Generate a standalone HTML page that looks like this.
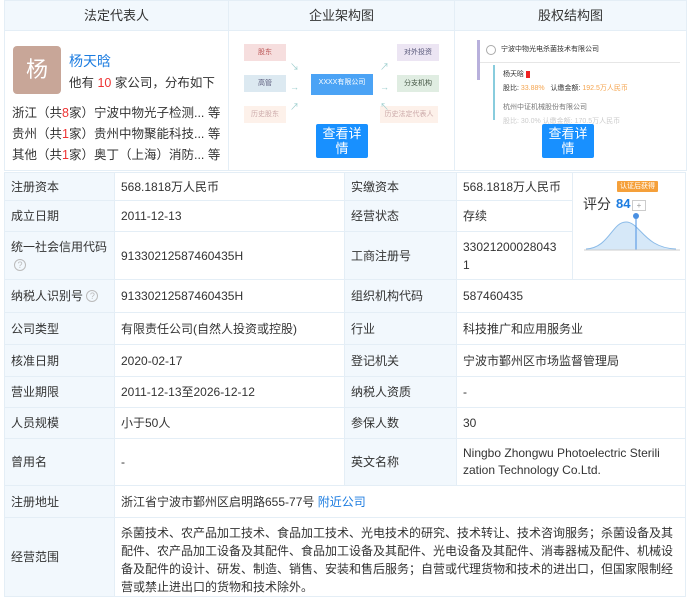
<!DOCTYPE html>
<html><head><meta charset="utf-8"><style>
*{margin:0;padding:0;box-sizing:border-box}
body{width:687px;height:595px;overflow:hidden;background:#fff;font-family:"Liberation Sans","Noto Sans CJK SC",sans-serif;font-size:12px;color:#333;position:relative}
.a{position:absolute}
.hd{background:#f2f8fd;border:1px solid #e4eef6;text-align:center;line-height:30px;font-size:13px;color:#333}
.c{position:absolute;border:1px solid #e4eef6;display:flex;align-items:center;padding-left:6px;line-height:18px;margin:-1px 0 0 -1px;word-break:break-all}
.l{background:#f2f8fd}
.btn{position:absolute;background:#1890ff;color:#fff;font-size:13px;line-height:15px;text-align:center;width:52px;height:34px;padding:2px 6px 0;border-radius:2px}
.bx{position:absolute;font-size:7px;text-align:center;line-height:17px;width:42px}
.q{display:inline-block;width:12px;height:12px;border:1px solid #bbb;border-radius:50%;font-size:9px;line-height:10px;text-align:center;color:#bbb}
.r{color:#e33}
</style></head><body>
<div class="a hd" style="left:4px;top:0;width:225px;height:31px">法定代表人</div>
<div class="a hd" style="left:228px;top:0;width:227px;height:31px">企业架构图</div>
<div class="a hd" style="left:454px;top:0;width:233px;height:31px">股权结构图</div>
<div class="a" style="left:4px;top:30px;width:683px;height:141px;border:1px solid #e4eef6"></div>
<div class="a" style="left:228px;top:30px;width:1px;height:141px;background:#e4eef6"></div>
<div class="a" style="left:454px;top:30px;width:1px;height:141px;background:#e4eef6"></div>
<div class="a" style="left:13px;top:46px;width:48px;height:48px;background:#c8a698;border-radius:4px;color:#fff;font-size:22px;text-align:center;line-height:48px">杨</div>
<div class="a" style="left:69px;top:51px;color:#1c7ce0;font-size:14px">杨天晗</div>
<div class="a" style="left:69px;top:72px;font-size:12.5px">他有 <span class="r">10</span> 家公司，分布如下</div>
<div class="a" style="left:12px;top:103px;line-height:21px;font-size:12.5px">浙江（共<span class="r">8</span>家）宁波中物光子检测... 等<br>贵州（共<span class="r">1</span>家）贵州中物聚能科技... 等<br>其他（共<span class="r">1</span>家）奥丁（上海）消防... 等</div>
<div class="bx" style="left:244px;top:44px;background:#f6dede;color:#b55">股东</div>
<div class="bx" style="left:244px;top:75px;background:#dce9f1;color:#557">高管</div>
<div class="bx" style="left:244px;top:106px;background:#fdf1ea;color:#caa">历史股东</div>
<div class="bx" style="left:311px;top:74px;width:62px;height:21px;background:#4ba3f5;color:#fff">XXXX有限公司</div>
<div class="bx" style="left:397px;top:44px;background:#ece5f3;color:#557">对外投资</div>
<div class="bx" style="left:397px;top:75px;background:#e0ede2;color:#454">分支机构</div>
<div class="bx" style="left:380px;top:106px;width:58px;background:#fdf1ea;color:#caa">历史法定代表人</div>
<div class="a" style="left:290px;top:62px;color:#9cc;font-size:9px;line-height:10px">↘<br><br>→<br><br>↗</div>
<div class="a" style="left:380px;top:62px;color:#9cc;font-size:9px;line-height:10px">↗<br><br>→<br><br>↖</div>
<div class="btn" style="left:316px;top:124px">查看详情</div>
<div class="a" style="left:477px;top:40px;width:3px;height:40px;background:#b8b0dc"></div>
<div class="a" style="left:486px;top:45px;width:10px;height:10px;border:1px solid #aaa;border-radius:50%"></div>
<div class="a" style="left:501px;top:44px;font-size:7px">宁波中物光电杀菌技术有限公司</div>
<div class="a" style="left:480px;top:62px;width:200px;height:1px;background:#e6e6e6"></div>
<div class="a" style="left:493px;top:65px;width:2px;height:55px;background:#8cd"></div>
<div class="a" style="left:503px;top:68px;font-size:7px;line-height:14px">杨天晗 <span style="background:#e22;color:#e22">■</span><br>股比: <span style="color:#f5a550">33.88%</span> &nbsp; 认缴金额: <span style="color:#f5a550">192.5万人民币</span></div>
<div class="a" style="left:503px;top:101px;font-size:7px;line-height:14px;color:#777">杭州中证机械股份有限公司<br><span style="color:#ccc">股比: 30.0% 认缴金额: 170.5万人民币</span></div>
<div class="btn" style="left:542px;top:124px">查看详情</div>

<div class="c l" style="left:5px;top:173px;width:111px;height:29px">注册资本</div>
<div class="c" style="left:115px;top:173px;width:231px;height:29px">568.1818万人民币</div>
<div class="c l" style="left:345px;top:173px;width:113px;height:29px">实缴资本</div>
<div class="c" style="left:457px;top:173px;width:117px;height:29px">568.1818万人民币</div>
<div class="c l" style="left:5px;top:201px;width:111px;height:32px">成立日期</div>
<div class="c" style="left:115px;top:201px;width:231px;height:32px">2011-12-13</div>
<div class="c l" style="left:345px;top:201px;width:113px;height:32px">经营状态</div>
<div class="c" style="left:457px;top:201px;width:117px;height:32px">存续</div>
<div class="c l" style="left:5px;top:232px;width:111px;height:49px;flex-direction:column;align-items:flex-start;justify-content:flex-start;padding-top:6px">统一社会信用代码<span class="q" style="margin:3px 0 0 3px">?</span></div>
<div class="c" style="left:115px;top:232px;width:231px;height:49px">91330212587460435H</div>
<div class="c l" style="left:345px;top:232px;width:113px;height:49px">工商注册号</div>
<div class="c" style="left:457px;top:232px;width:117px;height:49px;padding-right:12px">330212000280431</div>
<div class="c" style="left:573px;top:173px;width:114px;height:108px"></div>
<div class="a" style="left:583px;top:194px;font-size:14px">评分</div>
<div class="a" style="left:616px;top:196px;font-size:13px;color:#1c7ce0;font-weight:bold">84</div>
<div class="a" style="left:632px;top:200px;width:14px;height:11px;border:1px solid #ccc;font-size:8px;line-height:9px;text-align:center;color:#999">+</div>
<div class="a" style="left:617px;top:181px;width:41px;height:11px;background:#f5a03a;color:#fff;font-size:7px;line-height:11px;text-align:center;border-radius:1px">认证后获得</div>
<svg class="a" style="left:584px;top:212px" width="96" height="44"><path d="M2 37 C25 36 28 10 42 10 C56 10 60 36 92 37 L92 38 L2 38Z" fill="#d6e8f8"/><path d="M2 37 C25 36 28 10 42 10 C56 10 60 36 92 37" fill="none" stroke="#8bbbe8"/><line x1="52" y1="2" x2="52" y2="38" stroke="#4a90e2"/><circle cx="52" cy="4" r="3" fill="#4a90e2"/><line x1="0" y1="38" x2="96" y2="38" stroke="#ccc"/></svg>
<div class="c l" style="left:5px;top:280px;width:111px;height:34px">纳税人识别号&nbsp;<span class="q">?</span></div>
<div class="c" style="left:115px;top:280px;width:231px;height:34px">91330212587460435H</div>
<div class="c l" style="left:345px;top:280px;width:113px;height:34px">组织机构代码</div>
<div class="c" style="left:457px;top:280px;width:230px;height:34px">587460435</div>
<div class="c l" style="left:5px;top:313px;width:111px;height:33px">公司类型</div>
<div class="c" style="left:115px;top:313px;width:231px;height:33px">有限责任公司(自然人投资或控股)</div>
<div class="c l" style="left:345px;top:313px;width:113px;height:33px">行业</div>
<div class="c" style="left:457px;top:313px;width:230px;height:33px">科技推广和应用服务业</div>
<div class="c l" style="left:5px;top:345px;width:111px;height:33px">核准日期</div>
<div class="c" style="left:115px;top:345px;width:231px;height:33px">2020-02-17</div>
<div class="c l" style="left:345px;top:345px;width:113px;height:33px">登记机关</div>
<div class="c" style="left:457px;top:345px;width:230px;height:33px">宁波市鄞州区市场监督管理局</div>
<div class="c l" style="left:5px;top:377px;width:111px;height:32px">营业期限</div>
<div class="c" style="left:115px;top:377px;width:231px;height:32px">2011-12-13至2026-12-12</div>
<div class="c l" style="left:345px;top:377px;width:113px;height:32px">纳税人资质</div>
<div class="c" style="left:457px;top:377px;width:230px;height:32px">-</div>
<div class="c l" style="left:5px;top:408px;width:111px;height:32px">人员规模</div>
<div class="c" style="left:115px;top:408px;width:231px;height:32px">小于50人</div>
<div class="c l" style="left:345px;top:408px;width:113px;height:32px">参保人数</div>
<div class="c" style="left:457px;top:408px;width:230px;height:32px">30</div>
<div class="c l" style="left:5px;top:439px;width:111px;height:48px">曾用名</div>
<div class="c" style="left:115px;top:439px;width:231px;height:48px">-</div>
<div class="c l" style="left:345px;top:439px;width:113px;height:48px">英文名称</div>
<div class="c" style="left:457px;top:439px;width:230px;height:48px;line-height:17px;padding-right:20px">Ningbo Zhongwu Photoelectric Sterilization Technology Co.Ltd.</div>
<div class="c l" style="left:5px;top:486px;width:111px;height:33px">注册地址</div>
<div class="c" style="left:115px;top:486px;width:572px;height:33px">浙江省宁波市鄞州区启明路655-77号&nbsp;<span style="color:#1c7ce0">附近公司</span></div>
<div class="c l" style="left:5px;top:518px;width:111px;height:80px">经营范围</div>
<div class="c" style="left:115px;top:518px;width:572px;height:80px;align-items:flex-start;padding-top:6px;line-height:18px;padding-right:4px">杀菌技术、农产品加工技术、食品加工技术、光电技术的研究、技术转让、技术咨询服务；杀菌设备及其配件、农产品加工设备及其配件、食品加工设备及其配件、光电设备及其配件、消毒器械及配件、机械设备及配件的设计、研发、制造、销售、安装和售后服务；自营或代理货物和技术的进出口，但国家限制经营或禁止进出口的货物和技术除外。</div>
</body></html>
